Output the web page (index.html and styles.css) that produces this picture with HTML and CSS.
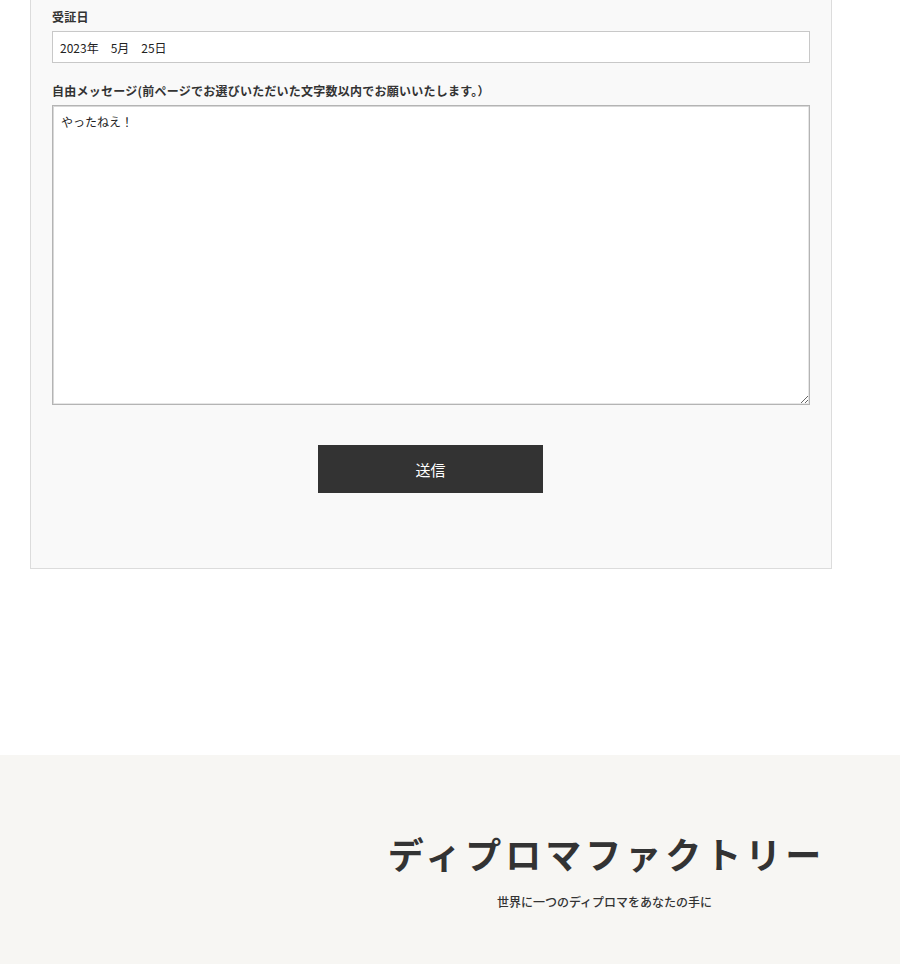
FILE: index.html
```html
<!DOCTYPE html>
<html lang="ja">
<head>
<meta charset="utf-8">
<title>フォーム</title>
<link rel="stylesheet" href="styles.css">
</head>
<body>
<main class="page">
  <section class="card">
    <div class="field">
      <label class="label">受証日</label>
      <input class="input" type="text" value="2023年　5月　25日">
    </div>
    <div class="field">
      <label class="label">自由メッセージ(前ページでお選びいただいた文字数以内でお願いいたします。）</label>
      <textarea class="textarea">やったねえ！</textarea>
    </div>
    <div class="actions">
      <button class="submit" type="button">送信</button>
    </div>
  </section>
</main>
<footer class="footer">
  <div class="footer-side"></div>
  <div class="footer-brand">
    <div class="brand-title">ディプロマファクトリー</div>
    <div class="brand-sub">世界に一つのディプロマをあなたの手に</div>
  </div>
</footer>
</body>
</html>
```
FILE: styles.css
```css
* { box-sizing: border-box; }
html, body { margin: 0; padding: 0; }
body {
  background: #fff;
  color: #333;
  font-family: "Noto Sans CJK JP", "Noto Sans", sans-serif;
}
.page {
  padding: 0 0 186px 30px;
}
.card {
  width: 802px;
  background: #f9f9f9;
  border: 1px solid #dcdcdc;
  border-top: none;
  padding: 8px 21px 75px;
}
.field { display: flex; flex-direction: column; }
.field + .field { margin-top: 19px; }
.label {
  font-size: 12px;
  font-weight: 700;
  line-height: 18px;
  margin-bottom: 5px;
  color: #333;
  letter-spacing: 0.02em;
}
.input {
  width: 758px;
  height: 32px;
  border: 1px solid #c8c8c8;
  background: #fff;
  padding: 0 7px;
  font-family: "Noto Sans CJK JP", sans-serif;
  font-size: 12px;
  color: #222;
}
.textarea {
  width: 758px;
  height: 300px;
  border: 1px solid #b4b4b4;
  box-shadow: inset 1px 1px 0 #d8d8d8, inset -1px -1px 0 #e6e6e6;
  background: #fff;
  padding: 7px 8px;
  font-family: "Noto Sans CJK JP", sans-serif;
  font-size: 12px;
  color: #222;
  resize: both;
}
.actions {
  display: flex;
  justify-content: center;
  margin-top: 40px;
  padding-right: 1px;
}
.submit {
  width: 225px;
  height: 48px;
  background: #333;
  color: #fff;
  border: none;
  font-family: "Noto Sans CJK JP", sans-serif;
  font-size: 15px;
  cursor: pointer;
}
.footer {
  background: #f7f6f3;
  height: 209px;
  display: grid;
  grid-template-columns: 309px 1fr;
}
.footer-brand {
  display: flex;
  flex-direction: column;
  align-items: center;
  padding-top: 72px;
}
.brand-title {
  font-size: 36px;
  font-weight: 700;
  letter-spacing: 4px;
  line-height: 52px;
  color: #333;
  margin-right: -4px;
}
.brand-sub {
  font-size: 12px;
  font-weight: 500;
  letter-spacing: 0;
  margin-top: 14px;
  color: #333;
}
```
